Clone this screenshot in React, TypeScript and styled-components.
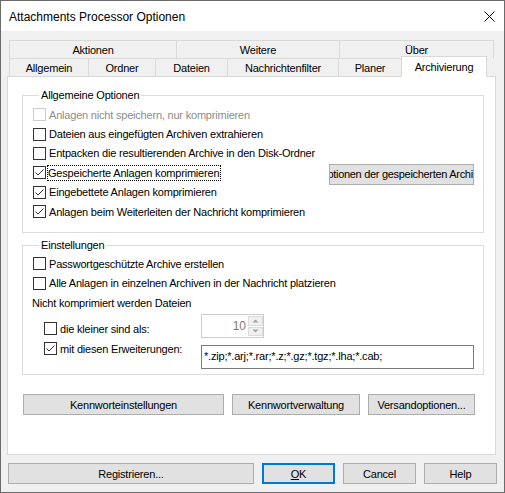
import React from "react";
import styled, { createGlobalStyle } from "styled-components";

const GlobalStyle = createGlobalStyle`
  html, body { margin: 0; padding: 0; background: #ffffff; }
  body { font-family: "Liberation Sans", Arial, sans-serif; font-size: 11px; letter-spacing: -0.2px; color: #000; }
  * { box-sizing: border-box; }
`;

const Window = styled.div`
  width: 505px;
  height: 493px;
  border: 1px solid #6b6b6b;
  display: flex;
  flex-direction: column;
  background: #f0f0f0;
`;

const TitleBar = styled.div`
  height: 30px;
  flex: none;
  background: #ffffff;
  display: flex;
  align-items: center;
  justify-content: space-between;
  padding: 0 9px 0 8px;
`;

const Title = styled.div`
  font-family: "Segoe UI", "Liberation Sans", Arial, sans-serif;
  font-size: 12px;
  letter-spacing: 0;
  color: #000;
  padding-top: 1px;
`;

const CloseIcon = styled.svg`
  width: 11px;
  height: 11px;
  display: block;
`;

const Body = styled.div`
  flex: 1;
  display: flex;
  flex-direction: column;
  padding: 9px 8px 0 6px;
`;

const TabStrip = styled.div`
  display: flex;
  flex-direction: column;
  padding-left: 2px;
`;

const TabRow = styled.div`
  display: flex;
  align-items: flex-end;
  height: 18px;
`;

const Tab = styled.div<{ $w: number; $last?: boolean; $active?: boolean }>`
  width: ${(p) => p.$w}px;
  height: ${(p) => (p.$active ? 21 : 18)}px;
  margin-bottom: ${(p) => (p.$active ? -1 : 0)}px;
  border: 1px solid #d9d9d9;
  border-bottom: none;
  border-right: ${(p) => (p.$last || p.$active ? "1px solid #d9d9d9" : "none")};
  background: ${(p) => (p.$active ? "#ffffff" : "#f0f0f0")};
  position: ${(p) => (p.$active ? "relative" : "static")};
  z-index: ${(p) => (p.$active ? 1 : 0)};
  display: flex;
  align-items: center;
  justify-content: center;
  padding-bottom: ${(p) => (p.$active ? 1 : 0)}px;
  white-space: nowrap;
`;

const Panel = styled.div`
  width: 489px;
  height: 379px;
  border: 1px solid #d9d9d9;
  background: #ffffff;
  padding: 12px 11px 0 14px;
  display: flex;
  flex-direction: column;
`;

const Group = styled.fieldset<{ $h: number; $mt?: number }>`
  margin: ${(p) => p.$mt ?? 0}px 0 0 0;
  padding: 0 0 0 10px;
  min-width: 0;
  height: ${(p) => p.$h}px;
  border: 1px solid #dcdcdc;
  display: flex;
  flex-direction: column;
`;

const Legend = styled.legend`
  margin-left: 6px;
  padding: 0 2px;
  line-height: 12px;
  font-size: 11px;
`;

const Rows = styled.div<{ $pt: number }>`
  display: flex;
  flex-direction: column;
  padding-top: ${(p) => p.$pt}px;
`;

const Row = styled.div<{ $h: number }>`
  height: ${(p) => p.$h}px;
  display: flex;
  align-items: center;
  white-space: nowrap;
`;

const PlainText = styled.span`
  margin-left: -1px;
`;

const FieldRow = styled.div<{ $h: number; $mt?: number }>`
  height: ${(p) => p.$h}px;
  margin-top: ${(p) => p.$mt ?? 0}px;
  display: flex;
  align-items: flex-start;
  padding-left: 11px;
`;

const CheckLabel = styled.label<{ $disabled?: boolean; $w?: number; $mt?: number }>`
  display: flex;
  align-items: center;
  height: 13px;
  width: ${(p) => (p.$w ? `${p.$w}px` : "auto")};
  margin-top: ${(p) => p.$mt ?? 0}px;
  color: ${(p) => (p.$disabled ? "#8d8d8d" : "#000")};
  white-space: nowrap;
  flex: none;
`;

const Box = styled.span<{ $disabled?: boolean }>`
  width: 13px;
  height: 13px;
  flex: none;
  border: 1px solid ${(p) => (p.$disabled ? "#cccccc" : "#333333")};
  background: #ffffff;
  margin-right: 3px;
  display: flex;
  align-items: center;
  justify-content: center;
`;

const Focus = styled.span`
  outline: 1px dotted #000;
  outline-offset: 0px;
  padding: 0 1px 0 0;
  margin-left: -1px;
  line-height: 14px;
`;

const Spacer = styled.div`
  flex: 1;
`;

const Button = styled.div<{ $w: number; $default?: boolean; $mr?: number; $mt?: number }>`
  width: ${(p) => p.$w}px;
  height: 21px;
  flex: none;
  margin-right: ${(p) => p.$mr ?? 0}px;
  margin-top: ${(p) => p.$mt ?? 0}px;
  background: #e1e1e1;
  border: ${(p) => (p.$default ? "2px solid #0078d7" : "1px solid #adadad")};
  display: flex;
  align-items: center;
  justify-content: center;
  white-space: nowrap;
  overflow: hidden;
  color: #000;
`;

const ClipText = styled.span`
  flex: none;
  letter-spacing: -0.3px;
`;

const Spin = styled.div`
  width: 63px;
  height: 24px;
  border: 1px solid #cccccc;
  background: #ffffff;
  display: flex;
  flex: none;
`;

const SpinValue = styled.div`
  flex: 1;
  color: #7a7a7a;
  text-align: right;
  padding: 4px 2px 0 0;
  font-size: 12px;
  letter-spacing: 0;
`;

const SpinButtons = styled.div`
  width: 15px;
  display: flex;
  flex-direction: column;
  gap: 1px;
  padding: 1px 0 1px 0;
`;

const SpinBtn = styled.div`
  flex: 1;
  background: #f0f0f0;
  border: 1px solid #dcdcdc;
  display: flex;
  align-items: center;
  justify-content: center;
`;

const TextInput = styled.div`
  width: 273px;
  height: 24px;
  border: 1px solid #7a7a7a;
  background: #ffffff;
  padding: 0 0 2px 2px;
  display: flex;
  align-items: center;
  flex: none;
`;

const PanelButtons = styled.div`
  display: flex;
  gap: 8px;
  margin-top: 19px;
  padding-left: 1px;
`;

const DialogButtons = styled.div`
  display: flex;
  gap: 8px;
  margin-top: 8px;
  padding-left: 1px;
`;

const Underline = styled.span`
  text-decoration: underline;
  text-underline-offset: 1px;
`;

const Check = () => (
  <svg width="11" height="11" viewBox="0 0 11 11">
    <polyline points="1.5,5.5 4,8 9.5,2.5" fill="none" stroke="#333" strokeWidth="1" />
  </svg>
);

const Arrow = ({ up }: { up?: boolean }) => (
  <svg width="7" height="4" viewBox="0 0 7 4">
    <polygon points={up ? "0.5,3.5 3.5,0.5 6.5,3.5" : "0.5,0.5 3.5,3.5 6.5,0.5"} fill="#a0a0a0" />
  </svg>
);

const CheckBox = ({
  label,
  checked,
  disabled,
  focus,
  w,
  mt,
}: {
  label: string;
  checked?: boolean;
  disabled?: boolean;
  focus?: boolean;
  w?: number;
  mt?: number;
}) => (
  <CheckLabel $disabled={disabled} $w={w} $mt={mt}>
    <Box $disabled={disabled}>{checked && <Check />}</Box>
    {focus ? <Focus>{label}</Focus> : <span>{label}</span>}
  </CheckLabel>
);

export default function App() {
  const rowH = 19.4;
  return (
    <>
      <GlobalStyle />
      <Window>
        <TitleBar>
          <Title>Attachments Processor Optionen</Title>
          <CloseIcon viewBox="0 0 11 11">
            <line x1="0.5" y1="0.5" x2="10.5" y2="10.5" stroke="#000" strokeWidth="1" />
            <line x1="10.5" y1="0.5" x2="0.5" y2="10.5" stroke="#000" strokeWidth="1" />
          </CloseIcon>
        </TitleBar>
        <Body>
          <TabStrip>
            <TabRow>
              <Tab $w={167}>Aktionen</Tab>
              <Tab $w={163}>Weitere</Tab>
              <Tab $w={155} $last>
                Über
              </Tab>
            </TabRow>
            <TabRow>
              <Tab $w={79}>Allgemein</Tab>
              <Tab $w={67}>Ordner</Tab>
              <Tab $w={72}>Dateien</Tab>
              <Tab $w={111}>Nachrichtenfilter</Tab>
              <Tab $w={63}>Planer</Tab>
              <Tab $w={86} $active>
                Archivierung
              </Tab>
            </TabRow>
          </TabStrip>
          <Panel>
            <Group $h={144}>
              <Legend>Allgemeine Optionen</Legend>
              <Rows $pt={4}>
                <Row $h={rowH}>
                  <CheckBox label="Anlagen nicht speichern, nur komprimieren" disabled />
                </Row>
                <Row $h={rowH}>
                  <CheckBox label="Dateien aus eingefügten Archiven extrahieren" />
                </Row>
                <Row $h={rowH}>
                  <CheckBox label="Entpacken die resultierenden Archive in den Disk-Ordner" />
                </Row>
                <Row $h={rowH}>
                  <CheckBox label="Gespeicherte Anlagen komprimieren" checked focus />
                  <Spacer />
                  <Button $w={145} $mr={9} $mt={3}>
                    <ClipText>Optionen der gespeicherten Archive</ClipText>
                  </Button>
                </Row>
                <Row $h={rowH}>
                  <CheckBox label="Eingebettete Anlagen komprimieren" checked />
                </Row>
                <Row $h={rowH}>
                  <CheckBox label="Anlagen beim Weiterleiten der Nachricht komprimieren" checked />
                </Row>
              </Rows>
            </Group>
            <Group $h={136} $mt={6}>
              <Legend>Einstellungen</Legend>
              <Rows $pt={3}>
                <Row $h={19.5}>
                  <CheckBox label="Passwortgeschützte Archive erstellen" />
                </Row>
                <Row $h={19.5}>
                  <CheckBox label="Alle Anlagen in einzelnen Archiven in der Nachricht platzieren" />
                </Row>
                <Row $h={20}>
                  <PlainText>Nicht komprimiert werden Dateien</PlainText>
                </Row>
                <FieldRow $h={24} $mt={1}>
                  <CheckBox label="die kleiner sind als:" w={157} mt={8} />
                  <Spin>
                    <SpinValue>10</SpinValue>
                    <SpinButtons>
                      <SpinBtn>
                        <Arrow up />
                      </SpinBtn>
                      <SpinBtn>
                        <Arrow />
                      </SpinBtn>
                    </SpinButtons>
                  </Spin>
                </FieldRow>
                <FieldRow $h={24} $mt={7}>
                  <CheckBox label="mit diesen Erweiterungen:" checked w={157} mt={-3} />
                  <TextInput>*.zip;*.arj;*.rar;*.z;*.gz;*.tgz;*.lha;*.cab;</TextInput>
                </FieldRow>
              </Rows>
            </Group>
            <PanelButtons>
              <Button $w={201}>Kennworteinstellungen</Button>
              <Button $w={128}>Kennwortverwaltung</Button>
              <Button $w={107}>Versandoptionen...</Button>
            </PanelButtons>
          </Panel>
          <DialogButtons>
            <Button $w={246}>Registrieren...</Button>
            <Button $w={73} $default>
              <Underline>O</Underline>K
            </Button>
            <Button $w={73}>Cancel</Button>
            <Button $w={73}>Help</Button>
          </DialogButtons>
        </Body>
      </Window>
    </>
  );
}
